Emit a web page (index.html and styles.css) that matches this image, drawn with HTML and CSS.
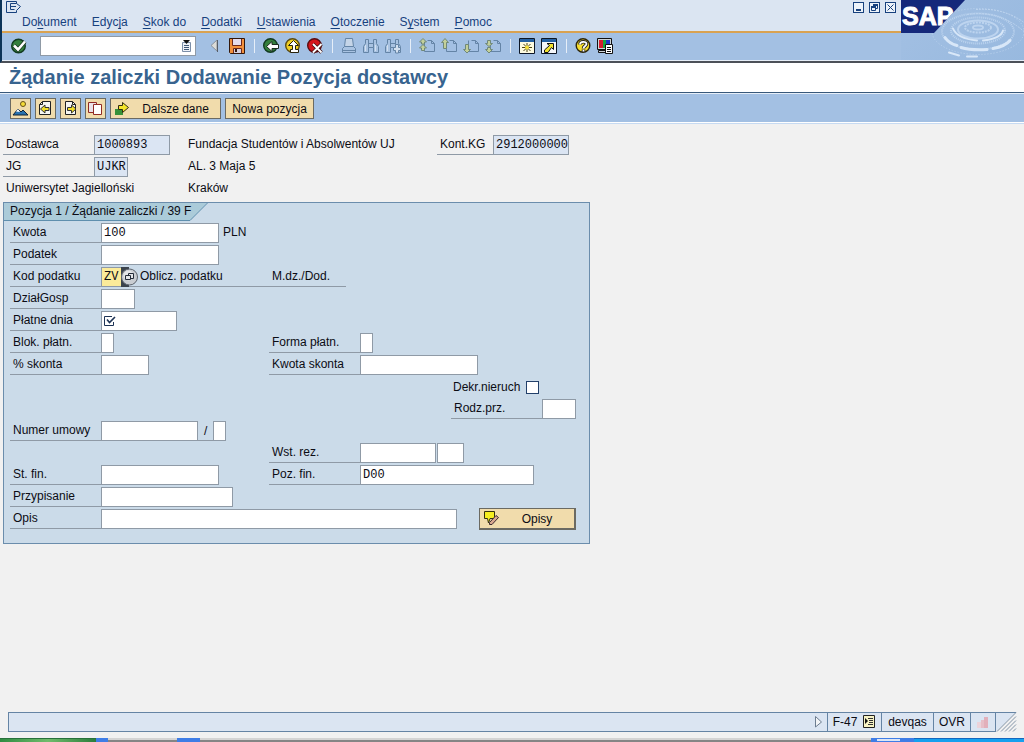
FILE: index.html
```html
<!DOCTYPE html>
<html lang="pl">
<head>
<meta charset="utf-8">
<title>Żądanie zaliczki Dodawanie Pozycja dostawcy</title>
<link rel="stylesheet" href="styles.css">
</head>
<body>
<svg class="defs" aria-hidden="true">
  <symbol id="page" viewBox="0 0 16 16"><path d="M5.500 2.500V13.500H15.500V5.500L12.500 2.500H8.500M12.500 2.500V5.500H15.500" fill="none" stroke="#6484a6"/></symbol>
  <symbol id="glass" viewBox="0 0 16 16"><path d="M2.500 1.500H5.500V5.500H10.500V1.500H13.500V5.500L15.500 8.500V14.500H10.500V9.500H5.500V14.500H.5V8.500L2.500 5.500ZM5.500 4.500V9.500M10.500 4.500V9.500" fill="#a9c3e2" stroke="#6484a6"/><path d="M2.500 7V13M12.500 7V13" stroke="#d3e0ef"/></symbol>
</svg>

<header class="top">
  <div class="bars">
    <div class="menubar">
      <div class="sysrow">
        <button class="plain" aria-label="Menu systemowe"><svg width="16" height="12" viewBox="0 0 16 12"><path d="M10.500 2.500V.5H.5V11.500H10.500V9.500M10.500 2.500L14.500 5.500L10.500 9.500M10.500 2.500H4.500V8.500H8.500M5 5.500H10" fill="none" stroke="#17417e"/></svg></button>
        <div class="winbtns">
          <button aria-label="Minimalizuj"><svg width="9" height="9"><path d="M2 6H7V8H2Z" fill="#17417e"/></svg></button>
          <button aria-label="Przywróć"><svg width="9" height="9"><path d="M3.500 3V1.500H7.500V5.500H6M1.500 3.500H5.500V7.500H1.500Z" fill="none" stroke="#17417e"/><path d="M3 1H8V3H3ZM1 3H6V5H1Z" fill="#17417e"/></svg></button>
          <button aria-label="Zamknij"><svg width="9" height="9"><path d="M1.500 1.500L7.500 7.500M7.500 1.500L1.500 7.500" stroke="#17417e"/></svg></button>
        </div>
      </div>
      <nav class="menu">
        <a href="#">Do<u>k</u>ument</a><a href="#">Edyc<u>j</u>a</a><a href="#"><u>S</u>kok do</a><a href="#"><u>D</u>odatki</a><a href="#"><u>U</u>stawienia</a><a href="#"><u>O</u>toczenie</a><a href="#">S<u>y</u>stem</a><a href="#"><u>P</u>omoc</a>
      </nav>
    </div>
    <div class="toolbar">
      <button class="ico" aria-label="Enter"><svg viewBox="0 0 16 16"><circle cx="7.500" cy="8" r="6.800" fill="#35803d" stroke="#123a20" stroke-width="1.400"/><path d="M3 7.500L7 11.500L14 3.500" fill="none" stroke="#16321c" stroke-width="4"/><path d="M3 7.500L7 11.500L14 3.500" fill="none" stroke="#fff" stroke-width="2.600"/></svg></button>
      <div class="command">
        <input type="text" aria-label="Kod transakcji">
        <button class="plain" aria-label="Historia"><svg width="9" height="12" viewBox="0 0 9 12"><path d="M.5 2.500H8.500V11.500H.5Z" fill="#eef2f8" stroke="#7b8ea8"/><path d="M1 0H8L4.500 4Z" fill="#111"/><path d="M2 5.500H7M2 7.500H7M2 9.500H7" stroke="#405878"/></svg></button>
      </div>
      <button class="arrow plain" aria-label="Zwiń"><svg width="9" height="14" viewBox="0 0 9 14"><path d="M7 1V12L1 6.500Z" fill="#dcdcd8" stroke="#8b929c"/><path d="M7.500 1V13" stroke="#555d68"/></svg></button>
      <div class="icons">
        <button class="ico" aria-label="Zapisz"><svg viewBox="0 0 16 16"><path d="M.5 .5H15.500V15.500H1.500L.5 14.500Z" fill="#f2903c" stroke="#33180c"/><path d="M4 1H12V7H4Z" fill="#e5dced"/><path d="M3.500 1V7.500H12.500V1M4.500 15V10.500H12.500V15" fill="none" stroke="#6e281c"/><path d="M5 11H12V15H5Z" fill="#d7d0df"/><path d="M6 11H8V14H6Z" fill="#33180c"/></svg></button>
        <i class="sep"></i>
        <button class="ico" aria-label="Wstecz"><svg viewBox="0 0 16 16"><circle cx="7.500" cy="7.500" r="6.800" fill="#35803d" stroke="#123a20" stroke-width="1.400"/><path d="M3.500 8.500L9 3.500V6.500H15.500V10.500H9V13.500Z" fill="#fff" stroke="#1c2c20"/></svg></button>
        <button class="ico" aria-label="Zakończ"><svg viewBox="0 0 16 16"><circle cx="7.500" cy="7.500" r="6.800" fill="#f0cf23" stroke="#5b4a12" stroke-width="1.400"/><path d="M8.500 2.500L13.500 7.500H10.500V11.500H13.500V14.500H5.500V11.500H7.500V7.500H3.500Z" fill="#fff" stroke="#28230c"/></svg></button>
        <button class="ico" aria-label="Anuluj"><svg viewBox="0 0 16 16"><circle cx="7.500" cy="7.500" r="6.800" fill="#d5161b" stroke="#5a0d10" stroke-width="1.400"/><path d="M6 6L14.500 14.500M14.500 6L6 14.500" stroke="#401013" stroke-width="3.500"/><path d="M6 6L14.500 14.500M14.500 6L6 14.500" stroke="#fff" stroke-width="1.900"/></svg></button>
        <i class="sep"></i>
        <button class="ico" aria-label="Drukuj" disabled><svg viewBox="0 0 16 16"><path d="M4.500 .5H11.500L12.500 8.500H3.500Z" fill="#c5d5e8" stroke="#6484a6"/><path d="M3.500 8.500L1.500 10.500V14.500H14.500V10.500L12.500 8.500ZM1.500 12.500H14.500" fill="#a9c3e2" stroke="#6484a6"/></svg></button>
        <button class="ico" aria-label="Znajdź" disabled><svg viewBox="0 0 16 16"><use href="#glass"/></svg></button>
        <button class="ico" aria-label="Znajdź następny" disabled><svg viewBox="0 0 16 16"><use href="#glass"/><path d="M10.500 6.500H13.500V9.500H15.500V12.500H13.500V15H10.500V12.500H8.500V9.500H10.500Z" fill="#d3e0ef" stroke="#6484a6"/></svg></button>
        <i class="sep"></i>
        <button class="ico" aria-label="Pierwsza strona" disabled><svg viewBox="0 0 16 16"><use href="#page"/><path d="M4 .5L7.500 4H5.500V6H2.500V4H.5ZM4 6.500L7.500 10H5.500V12.500H2.500V10H.5Z" fill="#c3d09a" stroke="#708878"/></svg></button>
        <button class="ico" aria-label="Poprzednia strona" disabled><svg viewBox="0 0 16 16"><use href="#page"/><path d="M4 .5L7.500 4.500H5.500V10.500H2.500V4.500H.5Z" fill="#c3d09a" stroke="#708878"/></svg></button>
        <button class="ico" aria-label="Następna strona" disabled><svg viewBox="0 0 16 16"><use href="#page"/><path d="M4 15L7.500 11.500H5.500V6.500H2.500V11.500H.5Z" fill="#c3d09a" stroke="#708878"/></svg></button>
        <button class="ico" aria-label="Ostatnia strona" disabled><svg viewBox="0 0 16 16"><use href="#page"/><path d="M4 15L7.500 11.500H5.500V9.500H2.500V11.500H.5ZM4 8.500L7.500 5.500H5.500V2.500H2.500V5.500H.5Z" fill="#c3d09a" stroke="#708878"/></svg></button>
        <i class="sep"></i>
        <button class="ico" aria-label="Nowy tryb"><svg viewBox="0 0 16 16"><path d="M.5 .5H15.500V15.500H.5Z" fill="#fdfbe0" stroke="#0c1626"/><path d="M1 1H15V4H1Z" fill="#2461a2"/><path d="M8 5V14M3 9.500H13M4.500 6L11.500 13M11.500 6L4.500 13" stroke="#4d4410"/><circle cx="8" cy="9.500" r="2" fill="#f5e13c"/></svg></button>
        <button class="ico" aria-label="Skrót"><svg viewBox="0 0 16 16"><path d="M.5 .5H15.500V15.500H.5Z" fill="#f5f7fa" stroke="#0c1626"/><path d="M1 1H15V4H1Z" fill="#2461a2"/><path d="M6 5.500H12.500V11.500L10.500 9.500L7 14.500H3.500V12L8.500 7.500Z" fill="#f3e32e" stroke="#111"/></svg></button>
        <i class="sep"></i>
        <button class="ico" aria-label="Pomoc"><svg viewBox="0 0 16 16"><circle cx="8" cy="7.500" r="6.800" fill="#f6dd2d" stroke="#2c250b" stroke-width="1.400"/><path d="M5 6.500C5 3 11.500 3 11.500 6C11.500 8 8.500 8 8.500 10.500M8.500 11.500V14" fill="none" stroke="#222" stroke-width="3.600"/><path d="M5 6.500C5 3 11.500 3 11.500 6C11.500 8 8.500 8 8.500 10.500M8.500 11.800V13.500" fill="none" stroke="#fff" stroke-width="1.800"/></svg></button>
        <button class="ico" aria-label="Dostosuj układ"><svg viewBox="0 0 16 16"><path d="M.5 .5H14.500V11.500H.5ZM1.500 12.500H12V14.500H1.500Z" fill="#cfd5d8" stroke="#111"/><path d="M2 2H6V10H2Z" fill="#d51c30"/><path d="M6 2H9V10H6Z" fill="#16a53f"/><path d="M9 2H13V10H9Z" fill="#1d35c8"/><path d="M8.500 6.500H15.500V15.500H8.500Z" fill="#fff" stroke="#111"/><path d="M10 9.500H14M10 11.500H14M10 13.500H14" stroke="#111"/></svg></button>
      </div>
    </div>
  </div>
  <div class="brand">
    <svg class="ripples" viewBox="0 0 123 61" preserveAspectRatio="xMaxYMid slice" aria-hidden="true">
      <g fill="none" stroke="#bdd4ef">
        <ellipse cx="77" cy="28" rx="5" ry="2" stroke-width="2"/>
        <ellipse cx="77" cy="28" rx="13" ry="5" stroke-width="2" stroke-dasharray="2 1"/>
        <ellipse cx="77" cy="30" rx="20" ry="9" stroke-width="2"/>
        <ellipse cx="77" cy="31" rx="27" ry="13" stroke-width="2" stroke-dasharray="1 1"/>
        <ellipse cx="77" cy="32" rx="36" ry="18" stroke-width="2" stroke-dasharray="1 1"/>
        <ellipse cx="77" cy="32" rx="46" ry="23" stroke-dasharray="1 2"/>
        <path d="M66 15Q98 10 123 32M75 10Q103 8 123 23" stroke-dasharray="2 1"/>
      </g>
      <g fill="none" stroke="#d8e7f8" stroke-linecap="round">
        <path d="M52 29Q56 39 76 41" stroke-width="2"/>
        <path d="M82 41Q100 39 102 31" stroke-width="2"/>
        <path d="M44 38Q48 44 56 46M60 48Q70 51 86 50M92 49Q104 47 109 41" stroke-width="3"/>
        <path d="M48 53L58 56M66 57H76" stroke-width="2"/>
      </g>
    </svg>
    <div class="logo">SAP</div>
  </div>
</header>

<h1>Żądanie zaliczki Dodawanie Pozycja dostawcy</h1>

<div class="actions">
  <button class="btn sq" aria-label="Nagłówek"><svg viewBox="0 0 17 17"><circle cx="11" cy="4" r="2.500" fill="#f6dc37" stroke="#66501a"/><path d="M1 15L6 9L9 12L11 10L16 15Z" fill="#2872b0" stroke="#123"/><path d="M4 11.500L6 9L8 12Z" fill="#fff"/></svg></button>
  <button class="btn sq" aria-label="Poprzednia pozycja"><svg viewBox="0 0 17 17"><path d="M5.500 1.500H13.500V14.500H2.500V4.500Z" fill="#f6f6f2" stroke="#222"/><path d="M5.500 1.500V4.500H2.500" fill="none" stroke="#222"/><path d="M3.500 9L8 5V7.500H12V10.500H8V13Z" fill="#f3df28" stroke="#333"/></svg></button>
  <button class="btn sq" aria-label="Następna pozycja"><svg viewBox="0 0 17 17"><path d="M3.500 1.500H10.500L13.500 4.500V14.500H3.500Z" fill="#f6f6f2" stroke="#222"/><path d="M10.500 1.500V4.500H13.500" fill="none" stroke="#222"/><path d="M14 9L9.500 5V7.500H5.500V10.500H9.500V13Z" fill="#f3df28" stroke="#333"/></svg></button>
  <button class="btn sq" aria-label="Kopiuj"><svg viewBox="0 0 17 17"><path d="M1.500 2.500H9.500V12.500H1.500Z" fill="#e9e2e8" stroke="#902a24"/><path d="M6.500 4.500H14.500V14.500H6.500Z" fill="#fff" stroke="#902a24"/></svg></button>
  <button class="btn more"><svg viewBox="0 0 17 17"><path d="M1 9H9V15H1Z" fill="#379139"/><path d="M4.500 5.500H8.500V2.500L14.500 7.500L8.500 12.500V9.500H4.500Z" fill="#f5e62a" stroke="#332f10"/></svg><span>Dalsze dane</span></button>
  <button class="btn new">Nowa pozycja</button>
</div>

<main>
  <div class="head">
    <div class="cell"><label for="vendor">Dostawca</label><input id="vendor" class="ro w76" value="1000893" readonly></div>
    <div class="txt">Fundacja Studentów i Absolwentów UJ</div>
    <div class="cell kg"><label for="kg">Kont.KG</label><input id="kg" class="ro w76" value="2912000000" readonly></div>
    <div class="cell first"><label for="jg">JG</label><input id="jg" class="ro w34" value="UJKR" readonly></div>
    <div class="txt">AL. 3 Maja 5</div>
    <div class="txt own first">Uniwersytet Jagielloński</div>
    <div class="txt">Kraków</div>
  </div>

  <section class="panel">
    <h2><svg class="tabshape" width="204" height="18" viewBox="0 0 204 18" aria-hidden="true"><path d="M0 0H203L186 17.500H0Z" fill="#abcbd9"/><path d="M203.500 0L186 17.500H0" fill="none" stroke="#5f8fae"/></svg><span>Pozycja 1 / Żądanie zaliczki / 39 F</span></h2>
    <div class="form">
      <div class="cell a r1"><label for="kwota">Kwota</label><input id="kwota" class="w118" value="100"><span class="unit">PLN</span></div>
      <div class="cell a r2"><label for="podatek">Podatek</label><input id="podatek" class="w118"></div>
      <div class="cell tax r3"><label for="kod">Kod podatku</label><input id="kod" class="focus" value="ZV"><button class="match plain" aria-label="Lista wartości"><svg width="17" height="20" viewBox="0 0 17 20"><path d="M0 0H8V20H0Z" fill="#3b434d"/><circle cx="8.500" cy="10" r="8" fill="#c9cdd2" stroke="#5c636d"/><circle cx="7.500" cy="8.500" r="5" fill="#e3e5e8"/><path d="M7.500 9V6.500H12.500V11.500H10M4.500 8.500H9.500V12.500H4.500Z" fill="none" stroke="#222b38"/></svg></button><span class="calc">Oblicz. podatku</span><span>M.dz./Dod.</span></div>
      <div class="cell a r4"><label for="dzial">DziałGosp</label><input id="dzial" class="w34"></div>
      <div class="cell a r5"><label for="dnia">Płatne dnia</label><span class="req"><input id="dnia" class="w76" required><svg width="12" height="12" viewBox="0 0 12 12" aria-hidden="true"><path d="M8 1.500H.5V10.500H9.500V7" fill="none" stroke="#1d3355"/><path d="M3 4.500L5.500 7.500L11 2" fill="none" stroke="#1d3355" stroke-width="1.600"/></svg></span></div>
      <div class="cell a r6"><label for="blok">Blok. płatn.</label><input id="blok" class="w13"></div>
      <div class="cell b r6"><label for="forma">Forma płatn.</label><input id="forma" class="w13"></div>
      <div class="cell a r7"><label for="skonta">% skonta</label><input id="skonta" class="w48"></div>
      <div class="cell b r7"><label for="kskonta">Kwota skonta</label><input id="kskonta" class="w118"></div>
      <div class="check c r8"><label for="dekr">Dekr.nieruch</label><input id="dekr" type="checkbox"></div>
      <div class="cell c r9"><label for="rodz">Rodz.prz.</label><input id="rodz" class="w34"></div>
      <div class="cell a r10"><label for="umowa">Numer umowy</label><input id="umowa" class="w97"><span class="slash">/</span><input class="w13" aria-label="Pozycja umowy"></div>
      <div class="cell b r11"><label for="rez">Wst. rez.</label><input id="rez" class="w76"><input class="w27" aria-label="Pozycja rezerwacji"></div>
      <div class="cell a r12"><label for="stfin">St. fin.</label><input id="stfin" class="w118"></div>
      <div class="cell b r12"><label for="pozfin">Poz. fin.</label><input id="pozfin" class="w174" value="D00"></div>
      <div class="cell a r13"><label for="przyp">Przypisanie</label><input id="przyp" class="w132"></div>
      <div class="cell wide r14"><label for="opis">Opis</label><input id="opis" class="grow"><button class="btn texts"><svg viewBox="0 0 17 17"><path d="M1.500 1.500H11.500V8.500H7L5.500 13L4.500 8.500H1.500Z" fill="#f6ee20" stroke="#33300f"/><path d="M6.500 12.500L13 5.500L15.500 7.500L9 14.500H6.500Z" fill="#d9a88f" stroke="#3b2a30"/></svg><span>Opisy</span></button></div>
    </div>
  </section>
</main>

<footer>
  <div class="status">
    <div class="msg"><svg width="8" height="12" viewBox="0 0 8 12" aria-hidden="true"><path d="M.5 .5V11L6.500 6Z" fill="#f2f4f6" stroke="#6d7d90"/></svg></div>
    <div class="tcode">F-47 <svg width="13" height="14" viewBox="0 0 13 14" aria-hidden="true"><path d="M.5 .5H11.500V12.500H.5Z" fill="#f7f3c4" stroke="#222"/><path d="M2 3L5 6L2 9Z" fill="#111"/><path d="M5 3.500H10M6 5.500H10M6 7.500H10M5 9.500H10" stroke="#333"/></svg></div>
    <div class="sys">devqas</div>
    <div class="ovr">OVR</div>
    <div class="led"><svg width="12" height="12" viewBox="0 0 12 12" aria-hidden="true"><path d="M0 6H4V12H0Z" fill="#ecd3da"/><path d="M4 4H7V12H4Z" fill="#e6bfc8"/><path d="M7 1H11V12H7Z" fill="#e2b0bb"/></svg></div>
    <svg class="grip" width="21" height="20" viewBox="0 0 21 20" aria-hidden="true"><path d="M0 0H20L0 20Z" fill="#dbe5f2"/><path d="M0 .5H20" stroke="#6584a4"/><path d="M1 19.500L20 .5M5 19.500L20 4.500M9 19.500L20 8.500M13 19.500L20 12.500M17 19.500L20 16.500" stroke="#8193a6" fill="none"/></svg>
  </div>
  <div class="taskbar"><i class="start"></i><i class="edge"></i><i class="gap1"></i><i class="edge2"></i><i class="gap2"></i><i class="edge3"></i><i class="tray"></i></div>
</footer>
</body>
</html>
```

FILE: styles.css
```css
* { box-sizing: border-box; }

body {
  margin: 0;
  min-height: 100vh;
  display: flex;
  flex-direction: column;
  background: #f1f1f1;
  color: #0c0c14;
  font: 12px/18px "Liberation Sans", Arial, sans-serif;
}

svg { display: block; flex: none; }
.defs { position: absolute; width: 0; height: 0; }
button { font: inherit; color: inherit; padding: 0; cursor: pointer; }
.plain, .ico { border: 0; background: none; }

/* Window header */
.top {
  display: flex;
  background: #a3c0e3;
  border-left: 2px solid #0b3358;
  border-bottom: 2px solid #4c5058;
}
.bars { flex: 1; min-width: 0; }
.menubar {
  height: 33px;
  background: #dbe5f2;
  border-bottom: 2px solid #d9a251;
}
.sysrow {
  display: flex;
  justify-content: space-between;
  height: 13px;
  padding: 1px 5px 0 4px;
}
.winbtns { display: flex; gap: 5px; padding-top: 1px; }
.winbtns button {
  width: 11px;
  height: 11px;
  border: 1px solid #17417e;
  background: #edf3fa;
}
.menu { display: flex; gap: 15px; padding-left: 20px; }
.menu a { color: #17417e; text-decoration: none; }
.menu u { text-underline-offset: 2px; }

.toolbar {
  display: flex;
  align-items: center;
  height: 28px;
  padding: 0 9px 1px;
  border-bottom: 1px solid #e6eef8;
}
.ico, .ico svg { width: 16px; height: 16px; }
.command { position: relative; margin: 0 14px 0 13px; }
.command input { display: block; width: 156px; height: 20px; }
.command button { position: absolute; right: 5px; top: 4px; }
.arrow { margin-right: 10px; }
.icons { display: flex; gap: 6px; }
.sep { width: 1px; margin: 1px 2px 1px 3px; background: #e6eef8; }

.brand {
  position: relative;
  width: 123px;
  overflow: hidden;
  background: linear-gradient(135deg, #a3c0e3, #98b9df);
  border-bottom: 1px solid #e6eef8;
}
.ripples { position: absolute; inset: 0; width: 100%; height: 100%; }
.logo {
  position: relative;
  width: 64px;
  height: 33px;
  padding-left: 1px;
  background: #14287a;
  clip-path: polygon(0 0, 100% 0, 33px 100%, 0 100%);
  color: #fff;
  font-size: 25px;
  font-weight: bold;
  line-height: 32px;
  -webkit-text-stroke: 1px #fff;
}

/* Title and application toolbar */
h1 {
  margin: 0;
  background: #fff;
  border-bottom: 1px solid #38587a;
  padding: 0 9px 1px;
  color: #38648f;
  font-size: 20px;
  line-height: 28px;
}
.actions {
  display: flex;
  gap: 4px;
  padding: 4px 10px 3px;
  background: #a3c0e3;
  border-top: 1px solid #e6eef8;
  border-bottom: 1px solid #fff;
}
.btn {
  display: flex;
  align-items: center;
  justify-content: center;
  height: 21px;
  border: 1px solid #6b6a62;
  background: #f1dcac;
}
.btn svg { width: 17px; height: 17px; }
.btn span { flex: 1; }
.sq { width: 21px; }
.more { width: 111px; padding-left: 3px; }
.new { width: 89px; }

/* Fields */
main { flex: 1; padding: 11px 3px; border-top: 1px solid #c6daf2; }
input {
  height: 20px;
  margin: 0;
  padding: 0 0 0 2px;
  border: 1px solid #8f9aa6;
  border-radius: 0;
  background: #fff;
  color: #0c0c14;
  font: 12px "Liberation Mono", "Courier New", monospace;
}
.ro { background: #dbe5f3; }
.w13 { width: 13px; }
.w27 { width: 27px; margin-left: 1px; }
.w34 { width: 34px; }
.w48 { width: 48px; }
.w76 { width: 76px; }
.w97 { width: 97px; }
.w118 { width: 118px; }
.w132 { width: 132px; }
.w174 { width: 174px; }

.cell { display: flex; height: 20px; }
.cell > * { flex: none; }
.cell > .grow { flex: 1; min-width: 0; }
.cell label {
  width: 91px;
  padding-left: 3px;
  border-bottom: 1px solid #8f9aa6;
  white-space: nowrap;
}
.head {
  display: grid;
  grid-template-columns: 185px 249px 1fr;
  grid-auto-rows: 20px;
  row-gap: 2px;
  margin-bottom: 3px;
}
.first { grid-column: 1; }
.own { padding-left: 3px; }
.kg label { width: 56px; }

/* Item panel */
.panel {
  max-width: 587px;
  padding-bottom: 14px;
  border: 1px solid #6b8dac;
  background: #cbdbe9;
}
h2 {
  position: relative;
  margin: 0 0 2px;
  font-size: 12px;
  font-weight: normal;
  line-height: 16px;
  height: 18px;
  padding-left: 6px;
}
h2 span { position: relative; }
.tabshape { position: absolute; left: 0; top: 0; }
.form {
  display: grid;
  grid-template-columns: 259px 182px 1fr;
  grid-template-rows: repeat(14, 20px);
  row-gap: 2px;
  padding: 0 13px 0 6px;
}
.a { grid-column: 1; }
.b { grid-column: 2; }
.c { grid-column: 3; }
.wide { grid-column: 1 / -1; }
.r1 { grid-row: 1; } .r2 { grid-row: 2; } .r3 { grid-row: 3; } .r4 { grid-row: 4; }
.r5 { grid-row: 5; } .r6 { grid-row: 6; } .r7 { grid-row: 7; } .r8 { grid-row: 8; }
.r9 { grid-row: 9; } .r10 { grid-row: 10; } .r11 { grid-row: 11; } .r12 { grid-row: 12; }
.r13 { grid-row: 13; } .r14 { grid-row: 14; }
.unit { padding-left: 4px; }
.tax {
  grid-column: 1 / 3;
  width: 336px;
  border-bottom: 1px solid #8f9aa6;
}
.tax label { border: 0; }
.focus { width: 20px; background: #fbeb9a; border-right: 0; }
.match { width: 17px; }
.calc { width: 134px; padding-left: 2px; }
.req { position: relative; }
.req input { display: block; }
.req svg { position: absolute; left: 3px; top: 4px; }
.check { display: flex; align-items: center; gap: 6px; padding-left: 2px; }
.check input {
  appearance: none;
  width: 13px;
  height: 13px;
  border: 1px solid #22406a;
}
.slash { width: 15px; padding-left: 6px; border-bottom: 1px solid #8f9aa6; line-height: 20px; }
.texts {
  width: 97px;
  margin-left: 22px;
  padding-left: 3px;
  border-width: 1px 2px 2px 1px;
  height: 22px;
  margin-top: -1px;
}

/* Status bar */
.status {
  display: flex;
  height: 20px;
  margin: 0 7px 6px 8px;
  line-height: 19px;
}
.status > div {
  display: flex;
  align-items: center;
  justify-content: center;
  border: solid #6584a4;
  border-width: 1px 1px 1px 0;
  background: #dbe5f2;
}
.status .msg { flex: 1; justify-content: flex-end; padding-right: 4px; border-left-width: 1px; }
.status .tcode { width: 54px; gap: 6px; }
.status .sys { width: 52px; }
.status .ovr { width: 37px; }
.status .led { width: 25px; }
.taskbar { display: flex; height: 4px; background: #858585; }
.start { width: 96px; background: linear-gradient(90deg, #2f8c42, #70bc6c, #2b7d3c); border-top: 1px solid #28713a; }
.edge { width: 12px; background: #3f7de6; }
.gap1 { width: 69px; border-top: 2px solid #d4d4d4; }
.edge2 { width: 23px; background: #3f7de6; }
.gap2 { flex: 1; border-top: 2px solid #d4d4d4; }
.edge3 { width: 43px; background: #dce6f6; border: solid #3f7de6; border-width: 1px 14px 1px 6px; }
.tray { width: 110px; background: #16a0ee; border-top: 1px solid #1567bd; }
```
